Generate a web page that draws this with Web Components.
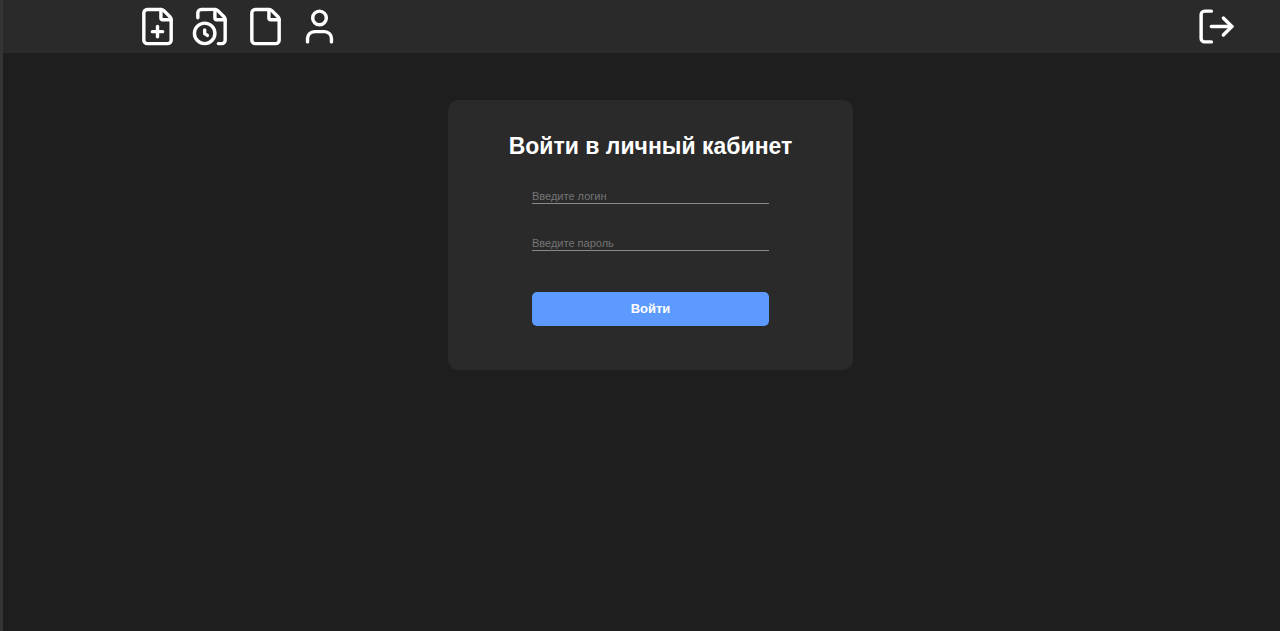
<!DOCTYPE html>
<html lang="ru">
<head>
<meta charset="utf-8">
<meta name="viewport" content="width=device-width, initial-scale=1">
<title>Вход</title>
<style>
html, body { margin: 0; min-height: 100%; background: #1e1e1e; }
body { font-family: "Liberation Sans", Arial, sans-serif; color: #fff; }
</style>
</head>
<body>
<app-shell>
  <nav-bar slot="header">
    <icon-link name="file-plus" label="Новый документ"></icon-link>
    <icon-link name="file-clock" label="История"></icon-link>
    <icon-link name="file" label="Документы"></icon-link>
    <icon-link name="user" label="Профиль"></icon-link>
    <icon-link slot="end" name="log-out" label="Выйти"></icon-link>
  </nav-bar>
  <login-card heading="Войти в личный кабинет">
    <text-field type="text" name="login" hint="Введите логин"></text-field>
    <text-field type="password" name="password" hint="Введите пароль"></text-field>
    <submit-button slot="action">Войти</submit-button>
  </login-card>
</app-shell>
<script>
class BaseElement extends HTMLElement {
  connectedCallback() {
    if (!this.shadowRoot) this.attachShadow({ mode: "open" }).innerHTML = this.render();
  }
}

customElements.define("app-shell", class extends BaseElement {
  render() {
    return `<style>
      :host { display: block; box-sizing: border-box; min-height: 100vh; border-left: 3px solid #353535; background: #1e1e1e; }
      main { display: flex; justify-content: center; padding: 47px 0 40px 18px; }
    </style>
    <slot name="header"></slot>
    <main><slot></slot></main>`;
  }
});

customElements.define("nav-bar", class extends BaseElement {
  render() {
    return `<style>
      :host { display: block; background: #2a2a2a; }
      header { display: flex; justify-content: space-between; align-items: center; padding: 6px 43px 6px 134px; }
      nav { display: flex; gap: 13px; }
    </style>
    <header><nav><slot></slot></nav><slot name="end"></slot></header>`;
  }
});

const SHEET = '<path d="M6 22a2 2 0 0 1-2-2V4a2 2 0 0 1 2-2h8a2.4 2.4 0 0 1 1.704.706l3.588 3.588A2.4 2.4 0 0 1 20 8v12a2 2 0 0 1-2 2z"/><path d="M14 2v5a1 1 0 0 0 1 1h5"/>';
const ICONS = {
  "file-plus": SHEET + '<path d="M9 15h6"/><path d="M12 18v-6"/>',
  "file-clock": '<path d="M16 22h2a2 2 0 0 0 2-2V8a2.4 2.4 0 0 0-.706-1.706l-3.588-3.588A2.4 2.4 0 0 0 14 2H6a2 2 0 0 0-2 2v2.85"/><path d="M14 2v5a1 1 0 0 0 1 1h5"/><path d="M8 14v2.2l1.6 1"/><circle cx="8" cy="16" r="6"/>',
  "file": SHEET,
  "user": '<path d="M19 21v-2a4 4 0 0 0-4-4H9a4 4 0 0 0-4 4v2"/><circle cx="12" cy="7" r="4"/>',
  "log-out": '<path d="M9 21H5a2 2 0 0 1-2-2V5a2 2 0 0 1 2-2h4"/><path d="m16 17 5-5-5-5"/><path d="M21 12H9"/>'
};

customElements.define("icon-link", class extends BaseElement {
  render() {
    return `<style>
      :host { display: block; }
      a { display: block; color: #fff; }
      svg { display: block; width: 41px; height: 41px; fill: none; stroke: currentColor; stroke-width: 2; stroke-linecap: round; stroke-linejoin: round; }
    </style>
    <a href="#" aria-label="${this.getAttribute("label")}"><svg viewBox="0 0 24 24" aria-hidden="true">${ICONS[this.getAttribute("name")]}</svg></a>`;
  }
});

customElements.define("login-card", class extends BaseElement {
  render() {
    return `<style>
      :host { display: block; box-sizing: border-box; width: 405px; max-width: 100%; background: #2a2a2a; border-radius: 10px; }
      form { display: flex; flex-direction: column; align-items: center; padding: 32px 40px 44px; }
      h1 { margin: 0; font-size: 23px; line-height: 28px; font-weight: 700; white-space: nowrap; }
      .fields, .action { width: 237px; max-width: 100%; }
      .fields { display: grid; gap: 31px; margin-top: 28px; }
      .action { margin-top: 41px; }
    </style>
    <form>
      <h1>${this.getAttribute("heading")}</h1>
      <div class="fields"><slot></slot></div>
      <div class="action"><slot name="action"></slot></div>
    </form>`;
  }
});

customElements.define("text-field", class extends BaseElement {
  render() {
    const hint = this.getAttribute("hint");
    return `<style>
      :host { display: block; }
      label { display: block; }
      input { display: block; box-sizing: border-box; width: 100%; height: 16px; margin: 0; padding: 0; border: 0; border-bottom: 1px solid #8a8a8a; border-radius: 0; outline: 0; background: transparent; color: #fff; font: 11px/15px "Liberation Sans", Arial, sans-serif; }
      input::placeholder { color: #757575; opacity: 1; }
    </style>
    <label><input type="${this.getAttribute("type")}" name="${this.getAttribute("name")}" placeholder="${hint}" aria-label="${hint}"></label>`;
  }
});

customElements.define("submit-button", class extends BaseElement {
  render() {
    return `<style>
      :host { display: block; }
      button { display: block; width: 100%; margin: 0; padding: 9px 0; border: 0; border-radius: 5px; background: #5c9aff; color: #fff; font: 700 13px/16px "Liberation Sans", Arial, sans-serif; cursor: pointer; }
    </style>
    <button type="button"><slot></slot></button>`;
  }
});
</script>
</body>
</html>
